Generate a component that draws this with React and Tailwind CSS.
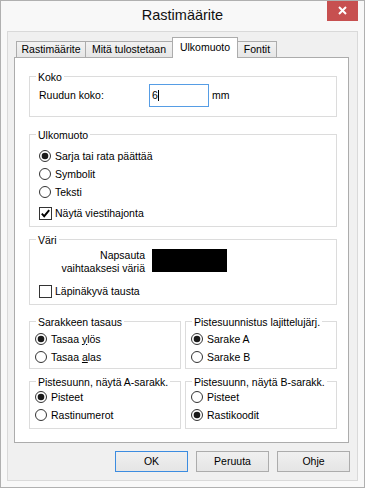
import React from "react";

function Radio({ checked }) {
  return (
    <svg width="12" height="12" viewBox="0 0 12 12" className="shrink-0">
      <circle cx="6" cy="6" r="5.5" fill="#fff" stroke="#333" strokeWidth="1" />
      {checked && <circle cx="6" cy="6" r="3.3" fill="#1a1a1a" />}
    </svg>
  );
}

function Check({ checked }) {
  return (
    <svg width="13" height="13" viewBox="0 0 13 13" className="shrink-0">
      <rect x="0.5" y="0.5" width="12" height="12" fill="#fff" stroke="#333" strokeWidth="1" />
      {checked && (
        <path d="M2.8 6.6 L5.2 9.2 L10.2 3.2" fill="none" stroke="#000" strokeWidth="1.9" />
      )}
    </svg>
  );
}

function Group({ title, className = "", children }) {
  return (
    <div className={`border border-[#dcdcdc] ${className}`}>
      <div className="-mt-[6px] ml-[6px] px-[2px] bg-white w-fit leading-[13px] whitespace-nowrap">
        {title}
      </div>
      {children}
    </div>
  );
}

function RadioRow({ checked, children, gap = "ml-[4px]" }) {
  return (
    <div className="h-[18px] flex items-center">
      <Radio checked={checked} />
      <span className={`${gap} leading-[13px] whitespace-nowrap`}>{children}</span>
    </div>
  );
}

function CheckRow({ checked, children, className = "" }) {
  return (
    <div className={`h-[18px] flex items-center ${className}`}>
      <Check checked={checked} />
      <span className="ml-[3px] leading-[13px] whitespace-nowrap">{children}</span>
    </div>
  );
}

function Button({ children, def }) {
  return (
    <div
      className={`w-[73px] h-[21px] flex items-center justify-center leading-[13px] border bg-linear-to-b from-[#f0f0f0] to-[#e5e5e5] ${
        def ? "border-[#3c8ce0]" : "border-[#acacac]"
      }`}
    >
      {children}
    </div>
  );
}

export default function App() {
  return (
    <div className="w-[365px] h-[488px] border border-[#b0b0b0] bg-[#f8f8f8] flex flex-col font-['Liberation_Sans',Arial,sans-serif] text-[10.5px] text-black overflow-hidden">
      {/* title bar */}
      <div className="relative h-[30px] shrink-0 flex items-center justify-center pb-[2px]">
        <span className="text-[14.5px] leading-[17px] text-[#111]">Rastimäärite</span>
        <div className="absolute -top-px right-[6px] w-[31px] h-[21px] bg-[#c75050] flex items-center justify-center">
          <svg width="9" height="9" viewBox="0 0 9 9">
            <path d="M1 1 L8 8 M8 1 L1 8" stroke="#fff" strokeWidth="2" />
          </svg>
        </div>
      </div>

      {/* client area */}
      <div className="mx-[6px] h-[450px] shrink-0 border border-[#d9d9d9] bg-[#f0f0f0] flex flex-col pl-[6px] pr-[8px]">
        {/* tabs */}
        <div className="mt-[5px] h-[20px] flex items-end pl-[2px]">
          <div className="w-[70px] h-[16px] border-t border-l border-r border-[#acacac] bg-linear-to-b from-[#f2f2f2] to-[#e6e6e6] flex justify-center pt-[1px] leading-[13px]">
            Rastimäärite
          </div>
          <div className="w-[86px] h-[16px] border-t border-[#acacac] bg-linear-to-b from-[#f2f2f2] to-[#e6e6e6] flex justify-center pt-[1px] leading-[13px]">
            Mitä tulostetaan
          </div>
          <div className="relative z-10 w-[66px] h-[21px] -mb-px border-t border-l border-r border-[#acacac] bg-white flex justify-center pt-[3px] leading-[13px]">
            Ulkomuoto
          </div>
          <div className="w-[39px] h-[16px] border-t border-r border-[#acacac] bg-linear-to-b from-[#f2f2f2] to-[#e6e6e6] flex justify-center pt-[1px] leading-[13px]">
            Fontit
          </div>
        </div>

        {/* panel */}
        <div className="h-[386px] shrink-0 border border-[#acacac] bg-white flex flex-col pl-[14px] pr-[11px]">
          <Group title="Koko" className="mt-[18px] pb-[9px]">
            <div className="h-[23px] flex items-center pl-[9px]">
              <span className="w-[110px] leading-[13px]">Ruudun koko:</span>
              <div className="w-[60px] h-[23px] border border-[#569de5] bg-white flex items-center pl-[2px] leading-[13px]">
                <span>6</span>
                <span className="w-px h-[11px] bg-black" />
              </div>
              <span className="ml-[3px] leading-[13px]">mm</span>
            </div>
          </Group>

          <Group title="Ulkomuoto" className="mt-[17px] pb-[4px]">
            <div className="mt-[5px] pl-[9px] flex flex-col">
              <RadioRow checked>Sarja tai rata päättää</RadioRow>
              <RadioRow>Symbolit</RadioRow>
              <RadioRow>Teksti</RadioRow>
              <CheckRow checked className="mt-[3px]">Näytä viestihajonta</CheckRow>
            </div>
          </Group>

          <Group title="Väri" className="mt-[12px] pb-[4px]">
            <div className="mt-[2px] flex items-start">
              <div className="w-[115px] text-right leading-[13px]">
                Napsauta
                <br />
                vaihtaaksesi väriä
              </div>
              <div className="ml-[7px] w-[75px] h-[23px] bg-black" />
            </div>
            <div className="pl-[9px] mt-[7px]">
              <CheckRow>Läpinäkyvä tausta</CheckRow>
            </div>
          </Group>

          <div className="mt-[16px] grid grid-cols-2 gap-[4px]">
            <Group title="Sarakkeen tasaus" className="pb-[2px]">
              <div className="mt-[1px] pl-[5px]">
                <RadioRow checked>
                  Tasaa <span className="underline">y</span>lös
                </RadioRow>
                <RadioRow>
                  Tasaa <span className="underline">a</span>las
                </RadioRow>
              </div>
            </Group>
            <Group title="Pistesuunnistus lajittelujärj." className="pb-[2px]">
              <div className="mt-[1px] pl-[5px]">
                <RadioRow checked>Sarake A</RadioRow>
                <RadioRow>Sarake B</RadioRow>
              </div>
            </Group>
          </div>

          <div className="mt-[12px] grid grid-cols-2 gap-[4px]">
            <Group title="Pistesuunn, näytä A-sarakk." className="pb-[4px]">
              <div className="-mt-px pl-[5px]">
                <RadioRow checked>Pisteet</RadioRow>
                <RadioRow>Rastinumerot</RadioRow>
              </div>
            </Group>
            <Group title="Pistesuunn, näytä B-sarakk." className="pb-[4px]">
              <div className="-mt-px pl-[5px]">
                <RadioRow>Pisteet</RadioRow>
                <RadioRow checked>Rastikoodit</RadioRow>
              </div>
            </Group>
          </div>
        </div>

        {/* buttons */}
        <div className="mt-[8px] -mr-px flex justify-end gap-[8px]">
          <Button def>OK</Button>
          <Button>Peruuta</Button>
          <Button>Ohje</Button>
        </div>
      </div>
    </div>
  );
}
